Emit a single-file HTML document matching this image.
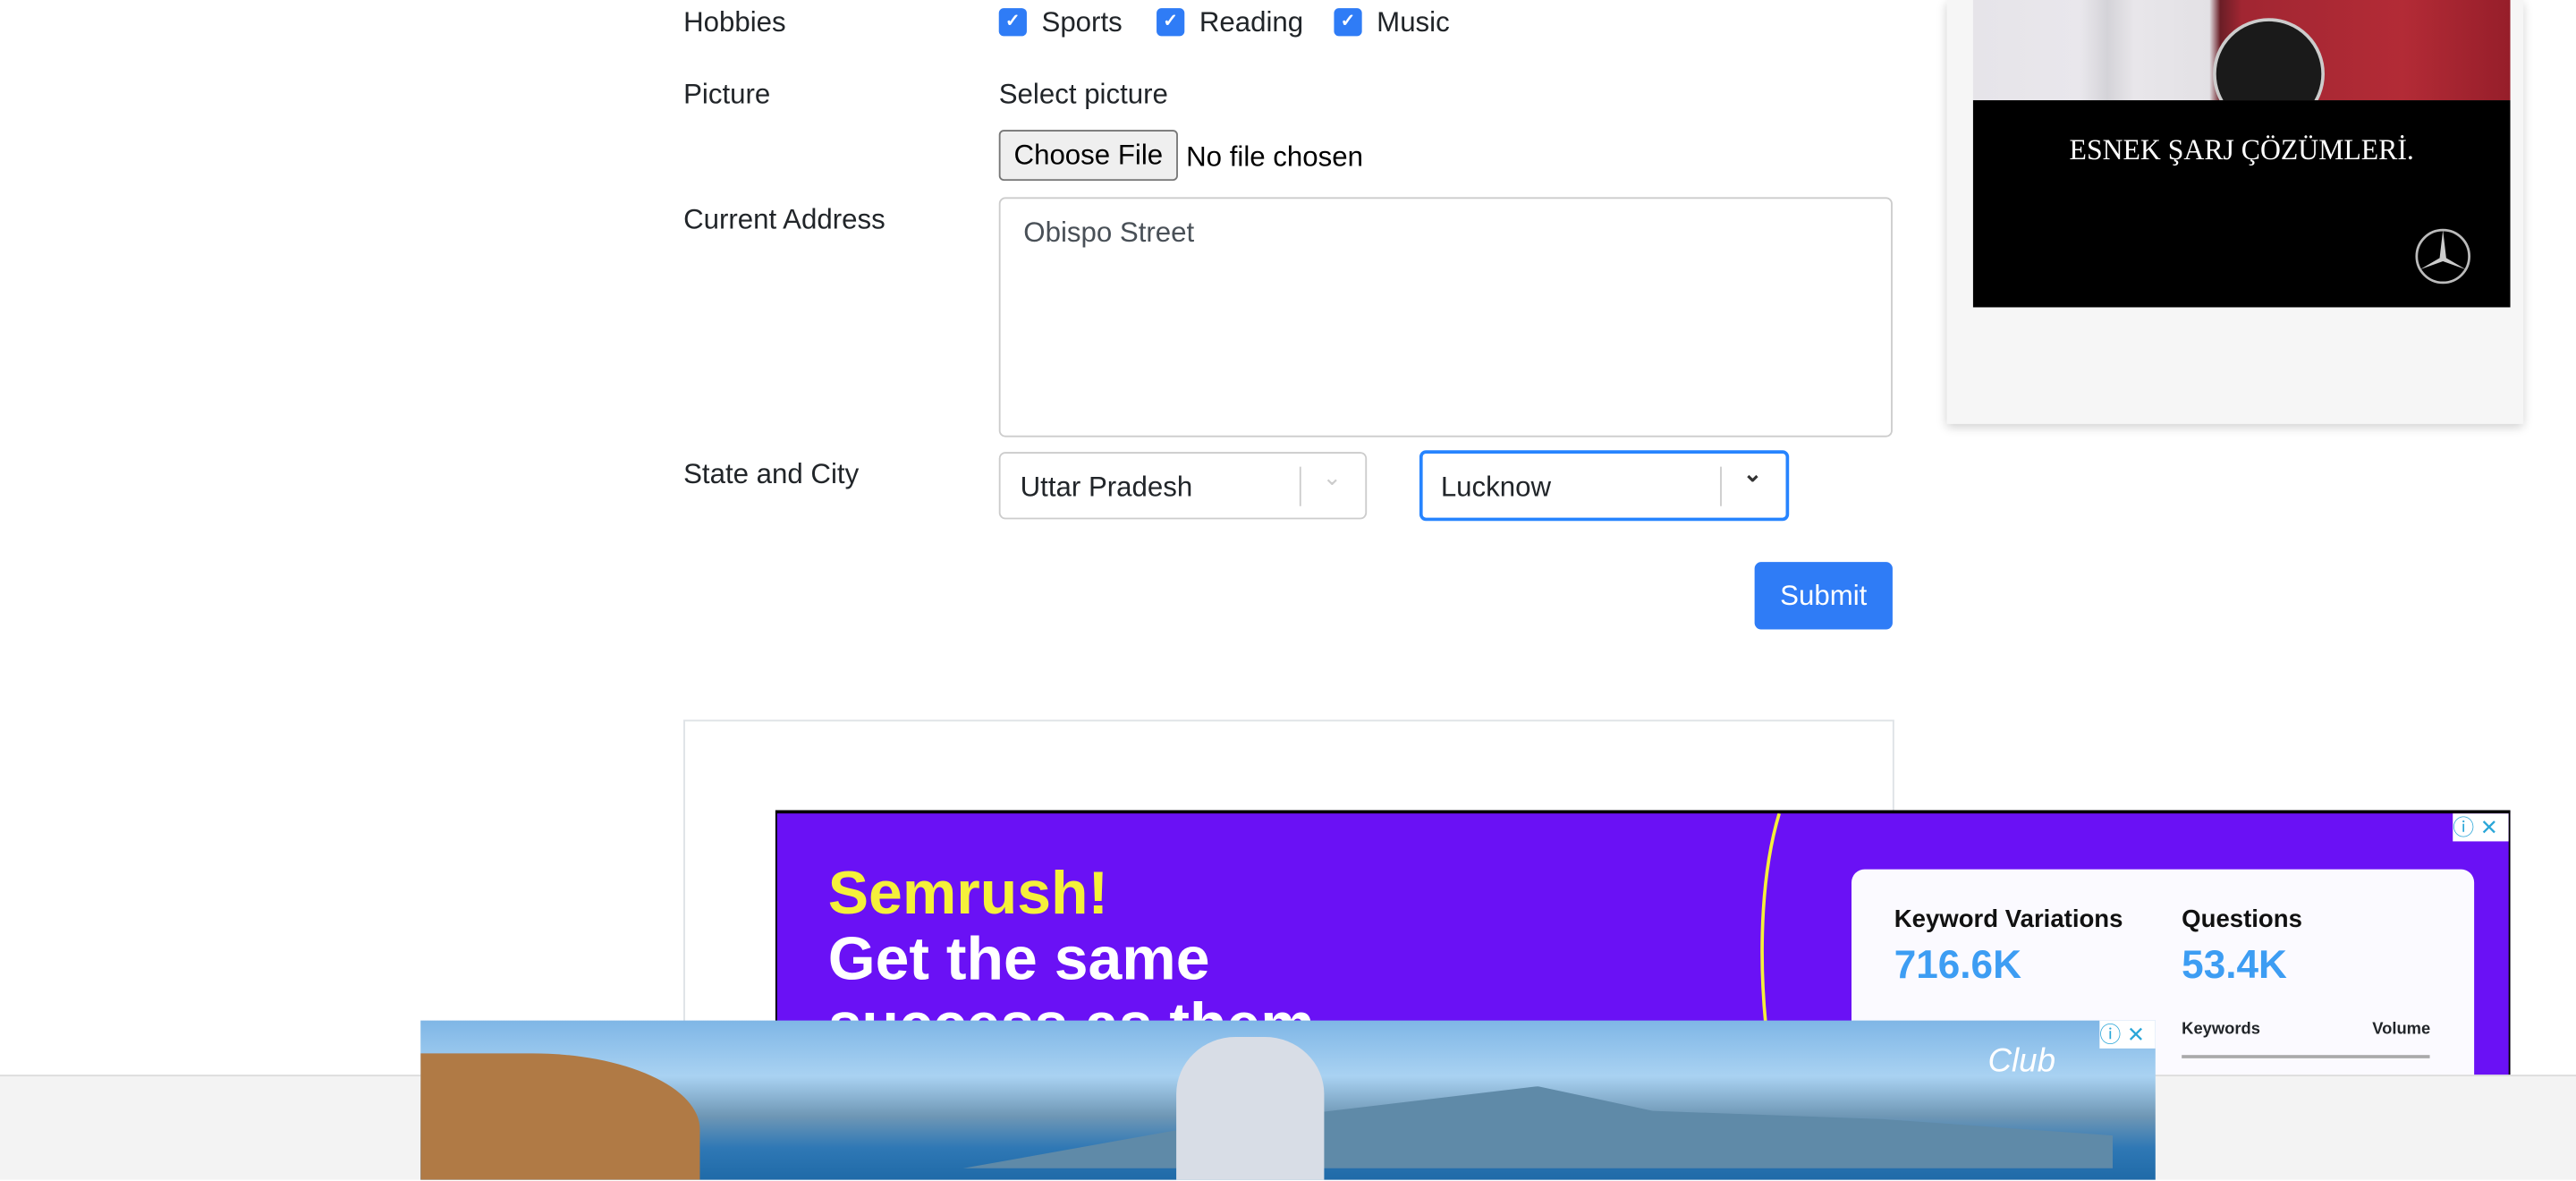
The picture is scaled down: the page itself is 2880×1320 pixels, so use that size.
<!DOCTYPE html>
<html><head><meta charset="utf-8"><style>
html,body{margin:0;padding:0;background:#fff;overflow:hidden;width:2880px;height:1320px}
#w{position:absolute;left:0;top:0;width:1568px;height:718px;overflow:hidden;transform:scale(1.836735);transform-origin:0 0;font-family:"Liberation Sans",sans-serif;color:#212529;font-size:17px}
.a{position:absolute}
.lbl{position:absolute;left:416px}
.cb{position:absolute;width:17px;height:17px;background:#2f7cf6;border-radius:3px;color:#fff;font-size:11px;text-align:center;line-height:17px;font-weight:bold}
.sel{position:absolute;border:1px solid #ccc;border-radius:4px;background:#fff;box-sizing:border-box}
</style></head><body><div id="w">
<div class="lbl" style="top:4px">Hobbies</div>
<div class="cb" style="left:608px;top:5px">✓</div><div class="a" style="left:634px;top:4px">Sports</div>
<div class="cb" style="left:704px;top:5px">✓</div><div class="a" style="left:730px;top:4px">Reading</div>
<div class="cb" style="left:812px;top:5px">✓</div><div class="a" style="left:838px;top:4px">Music</div>
<div class="lbl" style="top:48px">Picture</div>
<div class="a" style="left:608px;top:48px">Select picture</div>
<div class="a" style="left:608px;top:79px;width:109px;height:31px;border:1px solid #767676;border-radius:3px;background:#efefef;box-sizing:border-box;color:#000;text-align:center;line-height:29px">Choose File</div>
<div class="a" style="left:722px;top:86px;color:#000">No file chosen</div>
<div class="lbl" style="top:124px">Current Address</div>
<div class="sel" style="left:608px;top:120px;width:544px;height:146px;color:#495057;padding:11px 14px">Obispo Street</div>
<div class="lbl" style="top:279px">State and City</div>
<div class="sel" style="left:608px;top:275px;width:224px;height:41px;padding:11px 12px">Uttar Pradesh<span class="a" style="left:182px;top:8px;width:1px;height:24px;background:#ccc"></span><span class="a" style="left:196px;top:6px;color:#ccc;font-size:14px">&#8964;</span></div>
<div class="sel" style="left:864px;top:274px;width:225px;height:43px;border:2px solid #2684ff;padding:11px 11px">Lucknow<span class="a" style="left:181px;top:8px;width:1px;height:24px;background:#ccc"></span><span class="a" style="left:195px;top:4px;color:#333;font-size:14px;font-weight:bold">&#8964;</span></div>
<div class="a" style="left:1068px;top:342px;width:84px;height:41px;background:#2f7cf6;border-radius:4px;color:#fff;text-align:center;line-height:41px">Submit</div>
<div class="a" style="left:416px;top:438px;width:735px;height:200px;border:1px solid #dee2e6;border-bottom:none"></div>
<!-- mercedes ad -->
<div class="a" style="left:1185px;top:0;width:351px;height:258px;background:#f6f6f6;box-shadow:0 2px 6px rgba(0,0,0,.2)">
 <div class="a" style="left:16px;top:0;width:327px;height:61px;overflow:hidden;background:linear-gradient(90deg,#e6e4e9 0,#e9e7ec 20%,#d4d3d8 25%,#e8e6ea 30%,#e3e1e5 44%,#6a1e26 46%,#a12632 50%,#b32b36 80%,#961e2a 100%)">
  <svg class="a" style="left:145px;top:10px" width="70" height="51" viewBox="0 0 70 51"><circle cx="35" cy="35" r="33" fill="#1a1a1a" stroke="#ccc" stroke-width="2"/></svg>
 </div>
 <div class="a" style="left:16px;top:61px;width:327px;height:126px;background:#000;color:#fff;font-family:'Liberation Serif',serif">
  <div class="a" style="left:0;width:327px;top:20px;text-align:center;font-size:18px;transform:scaleX(.96)">ESNEK ŞARJ ÇÖZÜMLERİ.</div>
  <svg class="a" style="left:268px;top:77px" width="36" height="36" viewBox="0 0 36 36"><circle cx="18" cy="18" r="16" fill="none" stroke="#bbb" stroke-width="1.5"/><path d="M18 2 L20 19 L32 26 L18 21 L4 26 L16 19 Z" fill="#ccc"/></svg>
 </div>
</div>
<!-- semrush ad -->
<div class="a" style="left:472px;top:493px;width:1056px;height:162px;background:#6a11f5;border:1px solid #000;border-top-width:2px;border-bottom:none;box-sizing:border-box;overflow:hidden">
 <svg class="a" style="left:0;top:0" width="1056" height="160" viewBox="0 0 1056 160"><path d="M610 0 C598 40 596 100 606 160" fill="none" stroke="#f5f03a" stroke-width="2"/></svg>
 <div class="a" style="left:31px;top:28px;font-size:37px;font-weight:bold;color:#f5f03a">Semrush!</div>
 <div class="a" style="left:31px;top:68px;font-size:37px;font-weight:bold;color:#fff">Get the same</div>
 <div class="a" style="left:31px;top:108px;font-size:37px;font-weight:bold;color:#fff;height:50px;overflow:hidden">success as them</div>
 <div class="a" style="left:654px;top:34px;width:379px;height:126px;overflow:hidden;background:#fbfaff;border-radius:8px 8px 0 0">
  <div class="a" style="left:26px;top:22px;font-size:15px;font-weight:bold;color:#111">Keyword Variations</div>
  <div class="a" style="left:201px;top:22px;font-size:15px;font-weight:bold;color:#111">Questions</div>
  <div class="a" style="left:26px;top:45px;font-size:24px;font-weight:bold;color:#3d9df3">716.6K</div>
  <div class="a" style="left:201px;top:45px;font-size:24px;font-weight:bold;color:#3d9df3">53.4K</div>
  <div class="a" style="left:201px;top:92px;font-size:10px;font-weight:bold">Keywords</div>
  <div class="a" style="left:317px;top:92px;font-size:10px;font-weight:bold">Volume</div>
  <div class="a" style="left:201px;top:113px;width:151px;height:2px;background:#aaa"></div>
 </div>
 <div class="a" style="right:0;top:0;width:34px;height:17px;background:#fff;color:#2aa6d8;font-size:13px;line-height:17px">ⓘ ✕</div>
</div>
<!-- bottom bar -->
<div class="a" style="left:0;top:654px;width:1568px;height:64px;background:#f3f3f3;border-top:1px solid #ddd;box-sizing:border-box"></div>
<div class="a" style="left:256px;top:621px;width:1056px;height:97px;background:linear-gradient(180deg,#7fb6e6 0,#a9d2f2 35%,#6f97b5 60%,#2f78b5 80%,#1f6aa8 100%);overflow:hidden">
 <div class="a" style="left:330px;top:40px;width:700px;height:50px;background:#5f8aa8;clip-path:polygon(0 100%,20% 50%,50% 0,60% 30%,80% 40%,100% 60%,100% 100%)"></div>
 <div class="a" style="left:0;top:20px;width:170px;height:77px;background:#b07a45;border-radius:0 60% 0 0"></div>
 <div class="a" style="left:460px;top:10px;width:90px;height:87px;background:#d8dde6;border-radius:40% 40% 0 0"></div>
 <div class="a" style="left:954px;top:14px;color:#fff;font-style:italic;font-size:20px">Club</div>
 <div class="a" style="right:0;top:0;width:34px;height:17px;background:#fff;color:#2aa6d8;font-size:13px;line-height:17px">ⓘ ✕</div>
</div>
</div></body></html>
